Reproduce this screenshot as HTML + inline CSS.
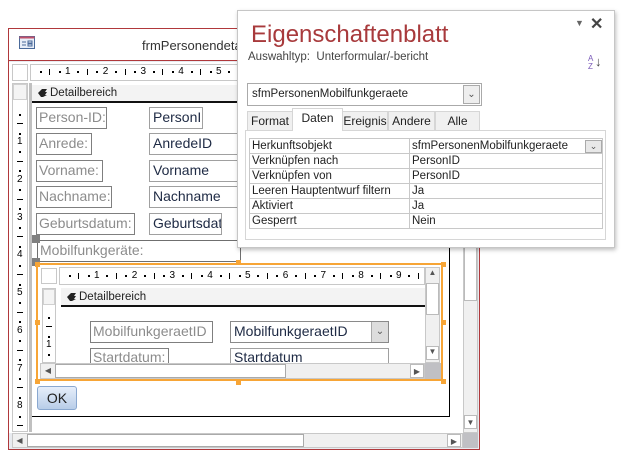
<!DOCTYPE html>
<html><head><meta charset="utf-8"><style>
*{box-sizing:border-box;margin:0;padding:0}
body{width:624px;height:457px;background:#fff;position:relative;overflow:hidden;font-family:"Liberation Sans",sans-serif;font-size:12px;color:#222}
.a{position:absolute}
.lbl{position:absolute;border:1px solid #7f7f7f;color:#8c8c8c;font-size:14px;line-height:19px;padding-left:2px;background:#fff;white-space:nowrap;overflow:hidden}
.txt{position:absolute;border:1px solid #a0a0a0;color:#1e2a44;font-size:14px;line-height:19px;padding-left:3px;background:#fff;white-space:nowrap;overflow:hidden}
.tick{position:absolute;font-size:10px;color:#000;line-height:10px}
.tab{position:absolute;top:111px;height:19px;border:1px solid #d6d6d6;border-bottom:none;background:#f0f0f0;font-size:12px;text-align:center;line-height:19px}
.row{position:absolute;left:249px;width:354px;height:15px;border:1px solid #c8c8c8;border-top:none;font-size:11.5px;line-height:14px}
.row span{position:absolute;left:2px}
.row b{font-weight:normal;position:absolute;left:162px}
.row i{position:absolute;left:159px;top:0;bottom:0;border-left:1px solid #c8c8c8}
.sb{position:absolute;background:#f0f0f0;border:1px solid #c8c8c8}
</style></head><body>
<div class="a" style="left:8px;top:28px;width:472px;height:422px;border:1px solid #b0383b;background:#e8ebf0"></div>
<div class="a" style="left:9px;top:29px;width:470px;height:32px;background:#fff;border-bottom:1px solid #b0383b"></div>
<svg class="a" style="left:19px;top:36px" width="16" height="13"><rect x="0.5" y="0.5" width="15" height="12" fill="#e8eef8" stroke="#4a6a9a"/><rect x="0.5" y="0.5" width="15" height="2" fill="#c0506a"/><path d="M3 6h4M3 9h4M9 5h4v2h-4zM9 8h4v2h-4z" stroke="#4a6a9a" fill="none"/></svg>
<div class="a" style="left:142px;top:38px;font-size:13px;color:#333">frmPersonendetai</div>
<div class="a" style="left:9px;top:62px;width:454px;height:371px;background:#fff"></div>
<div class="a" style="left:12px;top:64px;width:16px;height:17px;border:1px solid #c8c8c8;background:#fff"></div>
<div class="a" style="left:30px;top:64px;width:433px;height:17px;border:1px solid #c8c8c8;background:#fff"></div>
<div class="a" style="left:12px;top:83px;width:16px;height:349px;border:1px solid #c8c8c8;background:#fff"></div>
<div class="a" style="left:13px;top:84px;width:14px;height:16px;border:1px solid #d0d0d0;background:#f4f4f4"></div>
<div class="a" style="left:29px;top:83px;width:3px;height:349px;background:#c0c0c0"></div>
<div class="a" style="left:32px;top:83px;width:418px;height:334px;border-right:1px solid #000;border-bottom:1px solid #000;background:#fff"></div>
<div class="a" style="left:32px;top:85px;width:431px;height:18px;background:#f3f3f3;border-bottom:2px solid #111"></div>
<svg class="a" style="left:37px;top:88px" width="11" height="10"><path d="M1 5L5 1H10L8 4H10L8 7H10L6 9H4Z" fill="#222"/></svg>
<div class="a" style="left:50px;top:87px;font-size:11.5px;color:#222">Detailbereich</div>

<div class="lbl" style="left:36px;top:107px;width:71px;height:22px">Person-ID:</div>
<div class="txt" style="left:149px;top:107px;width:54px;height:22px">PersonII</div>
<div class="lbl" style="left:36px;top:133px;width:56px;height:22px">Anrede:</div>
<div class="txt" style="left:149px;top:133px;width:100px;height:22px">AnredeID</div>
<div class="lbl" style="left:36px;top:160px;width:67px;height:22px">Vorname:</div>
<div class="txt" style="left:149px;top:160px;width:100px;height:22px">Vorname</div>
<div class="lbl" style="left:36px;top:186px;width:76px;height:22px">Nachname:</div>
<div class="txt" style="left:149px;top:186px;width:100px;height:22px">Nachname</div>
<div class="lbl" style="left:36px;top:213px;width:99px;height:22px">Geburtsdatum:</div>
<div class="txt" style="left:149px;top:213px;width:73px;height:22px">Geburtsdat</div>
<div class="lbl" style="left:37px;top:240px;width:204px;height:22px;border-color:#6f6f6f">Mobilfunkgeräte:</div>
<div class="a" style="left:32px;top:235px;width:8px;height:8px;background:#808080"></div>
<div class="a" style="left:32px;top:258px;width:8px;height:8px;background:#808080"></div>

<div class="a" style="left:36px;top:263px;width:407px;height:118px;border:2px solid #f7a536;background:#fff"></div>
<div class="a" style="left:41px;top:268px;width:16px;height:16px;border:1px solid #c8c8c8"></div>
<div class="a" style="left:59px;top:267px;width:366px;height:18px;border:1px solid #c8c8c8"></div>
<div class="a" style="left:42px;top:288px;width:14px;height:75px;border:1px solid #c8c8c8"></div>
<div class="a" style="left:43px;top:289px;width:12px;height:16px;border:1px solid #d0d0d0;background:#f4f4f4"></div>
<div class="a" style="left:61px;top:288px;width:364px;height:19px;background:#f3f3f3;border-bottom:2px solid #111"></div>
<svg class="a" style="left:66px;top:292px" width="11" height="10"><path d="M1 5L5 1H10L8 4H10L8 7H10L6 9H4Z" fill="#222"/></svg>
<div class="a" style="left:79px;top:291px;font-size:11.5px;color:#222">Detailbereich</div>
<div class="lbl" style="left:90px;top:321px;width:123px;height:22px">MobilfunkgeraetID</div>
<div class="txt" style="left:230px;top:321px;width:159px;height:22px;border-color:#8a8a8a">MobilfunkgeraetID</div>
<div class="a" style="left:371px;top:322px;width:17px;height:20px;background:#ddd;border-left:1px solid #aaa;text-align:center;font-size:10px;line-height:20px;color:#555">&#8964;</div>
<div class="lbl" style="left:90px;top:348px;width:79px;height:16px;line-height:17px">Startdatum:</div>
<div class="txt" style="left:230px;top:348px;width:159px;height:16px;line-height:17px">Startdatum</div>
<div class="sb" style="left:425px;top:267px;width:15px;height:96px"></div>
<div class="a" style="left:426px;top:268px;width:13px;height:14px;font-size:8px;text-align:center;color:#555">&#9650;</div>
<div class="a" style="left:426px;top:283px;width:13px;height:32px;background:#fff;border:1px solid #bbb"></div>
<div class="a" style="left:426px;top:346px;width:13px;height:14px;font-size:8px;text-align:center;color:#555;border:1px solid #bbb;background:#fff">&#9660;</div>
<div class="sb" style="left:40px;top:363px;width:385px;height:16px"></div>
<div class="a" style="left:41px;top:364px;width:14px;height:14px;font-size:8px;text-align:center;line-height:14px;color:#555">&#9664;</div>
<div class="a" style="left:55px;top:364px;width:231px;height:14px;background:#fff;border:1px solid #aaa"></div>
<div class="a" style="left:410px;top:364px;width:14px;height:14px;font-size:8px;text-align:center;line-height:14px;color:#555;background:#fff;border:1px solid #bbb">&#9654;</div>
<div class="a" style="left:425px;top:363px;width:16px;height:16px;background:#c0c0c4"></div>
<div class="a" style="left:35px;top:262px;width:5px;height:5px;background:#f7a536"></div>
<div class="a" style="left:236px;top:260px;width:5px;height:5px;background:#f7a536"></div>
<div class="a" style="left:441px;top:262px;width:5px;height:5px;background:#f7a536"></div>
<div class="a" style="left:35px;top:320px;width:5px;height:5px;background:#f7a536"></div>
<div class="a" style="left:441px;top:320px;width:5px;height:5px;background:#f7a536"></div>
<div class="a" style="left:35px;top:379px;width:5px;height:5px;background:#f7a536"></div>
<div class="a" style="left:236px;top:380px;width:5px;height:5px;background:#f7a536"></div>
<div class="a" style="left:441px;top:379px;width:5px;height:5px;background:#f7a536"></div>

<div class="a" style="left:37px;top:386px;width:40px;height:24px;border:1px solid #8aa8d0;border-radius:3px;background:linear-gradient(#e6eefa,#b8cde8);font-size:14px;text-align:center;line-height:22px;color:#222">OK</div>

<div class="sb" style="left:463px;top:240px;width:15px;height:193px"></div>
<div class="a" style="left:464px;top:245px;width:13px;height:56px;background:#fff;border:1px solid #bbb"></div>
<div class="a" style="left:464px;top:415px;width:13px;height:14px;font-size:8px;text-align:center;line-height:14px;color:#555;background:#fff;border:1px solid #bbb">&#9660;</div>
<div class="sb" style="left:12px;top:433px;width:451px;height:15px"></div>
<div class="a" style="left:13px;top:434px;width:13px;height:13px;font-size:8px;text-align:center;line-height:13px;color:#555">&#9664;</div>
<div class="a" style="left:27px;top:434px;width:277px;height:13px;background:#fff;border:1px solid #aaa"></div>
<div class="a" style="left:447px;top:434px;width:14px;height:13px;font-size:8px;text-align:center;line-height:13px;color:#555;background:#fff;border:1px solid #bbb">&#9654;</div>
<div class="a" style="left:463px;top:433px;width:15px;height:15px;background:#c0c0c4"></div>

<div class="a" style="left:237px;top:10px;width:378px;height:238px;background:#fff;border:1px solid #c6c6c6;box-shadow:1px 2px 4px rgba(0,0,0,.25)"></div>
<div class="a" style="left:251px;top:21px;font-size:24px;color:#a83a3c">Eigenschaftenblatt</div>
<div class="a" style="left:248px;top:51px;font-size:11.5px;color:#444">Auswahltyp:&nbsp; Unterformular/-bericht</div>
<div class="a" style="left:575px;top:18px;font-size:9px;color:#666">&#9660;</div>
<div class="a" style="left:590px;top:14px;font-size:16px;color:#444;font-weight:bold">&#10005;</div>
<div class="a" style="left:588px;top:55px;font-size:8px;line-height:8px;color:#7a5ab8">A<br>Z</div>
<div class="a" style="left:595px;top:54px;font-size:13px;color:#444">&#8595;</div>
<div class="a" style="left:247px;top:83px;width:235px;height:23px;border:1px solid #aaa;font-size:11.5px;line-height:21px;padding-left:4px">sfmPersonenMobilfunkgeraete</div>
<div class="a" style="left:463px;top:85px;width:17px;height:19px;border:1px solid #aaa;background:#eee;text-align:center;font-size:10px;color:#555;line-height:17px">&#8964;</div>
<div class="tab" style="left:247px;width:46px">Format</div>
<div class="tab" style="left:292px;top:108px;height:23px;width:51px;background:#fff;z-index:2;line-height:18px">Daten</div>
<div class="tab" style="left:342px;width:46px">Ereignis</div>
<div class="tab" style="left:388px;width:47px">Andere</div>
<div class="tab" style="left:435px;width:45px">Alle</div>
<div class="a" style="left:245px;top:130px;width:361px;height:110px;border:1px solid #d6d6d6;background:#fff"></div>
<div class="row" style="top:138px;border-top:1px solid #c8c8c8;height:16px"><span>Herkunftsobjekt</span><i></i><b>sfmPersonenMobilfunkgeraete</b><div class="a" style="left:335px;top:1px;width:17px;height:13px;background:#e8e8e8;border:1px solid #aaa;font-size:9px;text-align:center;line-height:10px;color:#555">&#8964;</div></div>
<div class="row" style="top:154px"><span>Verknüpfen nach</span><i></i><b>PersonID</b></div>
<div class="row" style="top:169px"><span>Verknüpfen von</span><i></i><b>PersonID</b></div>
<div class="row" style="top:184px"><span>Leeren Hauptentwurf filtern</span><i></i><b>Ja</b></div>
<div class="row" style="top:199px"><span>Aktiviert</span><i></i><b>Ja</b></div>
<div class="row" style="top:214px"><span>Gesperrt</span><i></i><b>Nein</b></div>

<script>
function hr(left,top,first,n,maxX){
 var s=37.75/4;
 for(var i=1;i<n*4;i++){
  var x=first-37.75+i*s; if(x>maxX)break;
  var e=document.createElement('div');e.className='a';
  if(i%4==0){e.className='tick';e.textContent=i/4;e.style.left=(x-3)+'px';e.style.top=(top-5)+'px';}
  else if(i%2==0){e.style.cssText='left:'+x+'px;top:'+(top-3)+'px;width:1px;height:6px;background:#000';}
  else{e.style.cssText='left:'+x+'px;top:'+(top-1)+'px;width:2px;height:2px;background:#000';}
  document.body.appendChild(e);
 }
}
function vr(left,first,n,maxY,minY){
 var s=37.75/4;
 for(var i=1;i<n*4;i++){
  var y=first-37.75+i*s; if(y>maxY)break; if(y<minY)continue;
  var e=document.createElement('div');e.className='a';
  if(i%4==0){e.className='tick';e.textContent=i/4;e.style.left=(left-3)+'px';e.style.top=(y-5)+'px';}
  else if(i%2==0){e.style.cssText='left:'+(left-3)+'px;top:'+y+'px;width:6px;height:1px;background:#000';}
  else{e.style.cssText='left:'+(left-1)+'px;top:'+y+'px;width:2px;height:2px;background:#000';}
  document.body.appendChild(e);
 }
}
hr(30,72,68,7,236);
hr(59,276,97,10,422);
vr(20,142,9,428,104);
vr(49,345,2,360,310);
</script>
</body></html>
